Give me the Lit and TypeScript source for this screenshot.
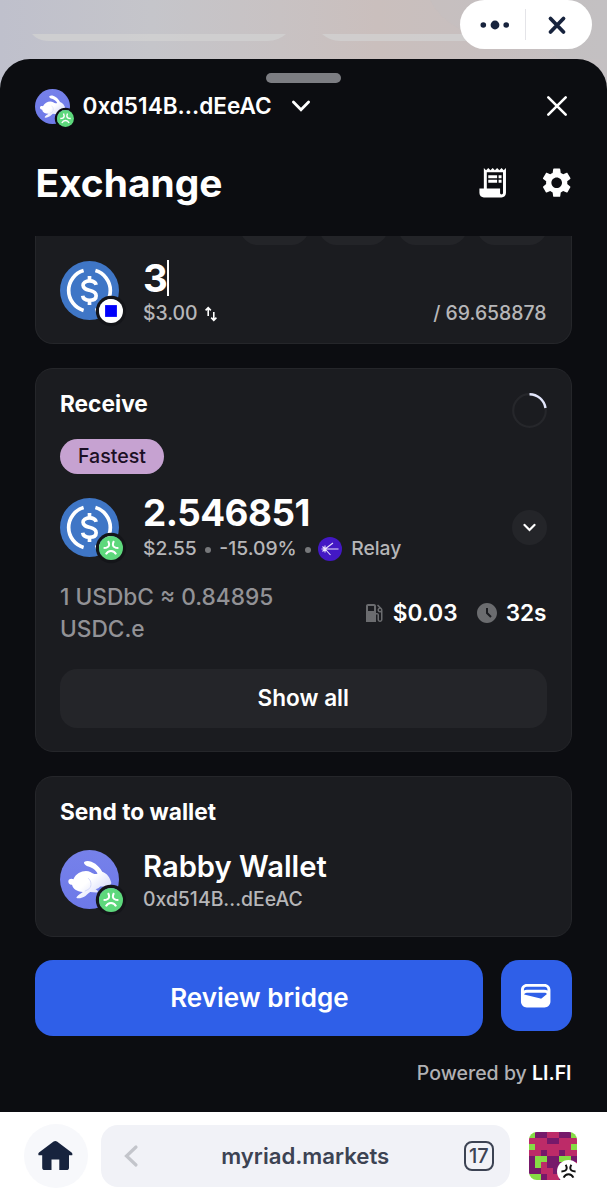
import { LitElement, html, css, svg } from "lit";
import { customElement, property } from "lit/decorators.js";

const chainGlyph = svg`
  <path d="M9.1 5C10.5 7.8 10.3 10 8.8 11C7.7 11.7 6.2 12 4.6 12M14.9 5C13.5 7.8 13.7 10 15.2 11C16.3 11.7 17.8 12 19.4 12M6.9 18.4C8 16.1 9.8 14.9 12 14.9S16 16.1 17.1 18.4"
    fill="none" stroke="currentColor" stroke-width="2" stroke-linecap="butt"/>`;

@customElement("chain-badge")
class ChainBadge extends LitElement {
  @property() kind = "green";
  static styles = css`
    :host { display: block; }
    svg { display: block; width: 100%; height: 100%; }
    .light { color: #fff; }
  `;
  render() {
    return this.kind === "base"
      ? html`<svg viewBox="0 0 24 24"><circle cx="12" cy="12" r="12" fill="#fff"/><rect x="6.1" y="6.1" width="11.8" height="11.8" fill="#0000fb"/></svg>`
      : html`<svg class="light" viewBox="0 0 24 24"><circle cx="12" cy="12" r="12" fill="#5dd87c"/>${chainGlyph}</svg>`;
  }
}

@customElement("token-avatar")
class TokenAvatar extends LitElement {
  @property() kind = "usdc";
  @property() chain = "green";
  @property({ type: Boolean, reflect: true }) small = false;
  static styles = css`
    :host { display: block; position: relative; width: 59px; height: 59px; flex: none; --ring: #141519; }
    :host([small]) { width: 35px; height: 35px; --ring: #0c0d11; }
    .pic { display: block; width: 100%; height: 100%; }
    .badge {
      position: absolute; left: 39px; top: 38.4px; width: 24px; height: 24px;
      border-radius: 50%; box-shadow: 0 0 0 3.2px var(--ring);
    }
    :host([small]) .badge { left: 22.1px; top: 21.7px; width: 17px; height: 17px; box-shadow: 0 0 0 2.2px var(--ring); }
  `;
  render() {
    const usdc = html`<svg class="pic" viewBox="0 0 32 32">
      <circle cx="16" cy="16" r="16" fill="#3f76c6"/>
      <g fill="none" stroke="#fff" stroke-width="2">
        <path d="M12.8 5.2A11.25 11.25 0 0 0 12.8 26.8M19.2 5.2A11.25 11.25 0 0 1 19.2 26.8"/>
        <path d="M19.6 13C19.3 11.5 18 10.8 16 10.8C13.8 10.8 12.5 11.8 12.5 13.2C12.5 15 14.2 15.4 16 15.9C18.1 16.4 19.6 17 19.6 18.8C19.6 20.4 18.2 21.3 16 21.3C13.8 21.3 12.5 20.5 12.3 18.9"/>
        <path d="M16 8.2V11M16 21V23.9"/>
      </g>
    </svg>`;
    const rabby = html`<svg class="pic" viewBox="0 0 176 176">
      <defs>
        <linearGradient id="bg" x1="0" y1="0" x2="0" y2="1"><stop offset="0" stop-color="#7681ea"/><stop offset="1" stop-color="#6d79e8"/></linearGradient>
        <linearGradient id="body" x1="0" y1="0" x2="1" y2="1"><stop offset=".5" stop-color="#fff"/><stop offset="1" stop-color="#c5cbf8"/></linearGradient>
      </defs>
      <circle cx="88" cy="88" r="88" fill="url(#bg)"/>
      <path fill="url(#body)" d="M72 36C86 27 112 40 126 65C140 69 150 84 153 98C153 108 138 110 120 109C116 114 112 116 106 117C114 121 116 126 108 127L90 125C82 129 76 144 52 144C44 143 54 134 68 125C50 125 38 116 36 104C26 104 22 94 27 88C32 84 38 86 40 87C50 66 74 58 92 66C98 70 106 74 112 70C106 58 92 51 80 48C74 44 70 40 72 36Z"/>
      <path d="M84 84Q96 94 91 111Q85 119 74 123" fill="none" stroke="#cdd2f7" stroke-width="2.4"/>
    </svg>`;
    return html`${this.kind === "usdc" ? usdc : rabby}<chain-badge class="badge" kind=${this.chain}></chain-badge>`;
  }
}

const PIXELS = ["gppmmppg", "mmmppmmm", "gmmmmmmg", "mmpmmpmm", "pggppggp", "pgmpppmm", "ppmmpmpp", "ggpmmppp"];
const PIXEL_COLORS: Record<string, string> = { g: "#86dc45", p: "#76196a", m: "#bd2b68" };

@customElement("app-root")
class AppRoot extends LitElement {
  static styles = css`
    :host {
      display: flex; flex-direction: column; width: 607px; height: 1199px; overflow: hidden;
      font-family: Inter, "Liberation Sans", sans-serif; color: #fff;
      background: linear-gradient(90deg, #bfc0cc 0, #c5c5ca 25%, #c8c2c3 46%, #cabfbd 62%, #c7bfbf 80%, #c4c0c2 100%);
    }
    * { box-sizing: border-box; }
    svg { display: block; flex: none; }
    .top { height: 59px; flex: none; display: flex; position: relative; justify-content: flex-end; padding-right: 15px; }
    .backdrop { position: absolute; left: 0; top: 0; }
    .capsule { position: relative; width: 132px; height: 49px; border-radius: 24.5px; background: #fff; display: flex; align-items: center; }
    .capsule .half { flex: 1; display: flex; justify-content: center; }
    .capsule .half:first-child { padding-left: 2px; }
    .capsule .half:last-child { padding-right: 4px; }
    .capsule .rule { width: 1px; height: 31px; background: #e4e4e8; }

    .sheet { height: 1053px; flex: none; background: #0c0d11; border-radius: 30px 30px 0 0; padding: 14px 35.5px 0 35.4px; display: flex; flex-direction: column; }
    .handle { width: 75px; height: 9.5px; border-radius: 5px; background: #7c7d82; margin: 0 auto; flex: none; }
    .account { display: flex; align-items: center; height: 35px; margin-top: 6px; }
    .account .addr { font-size: 22.6px; font-weight: 600; margin-left: 12.1px; width: 209px; white-space: nowrap; padding-bottom: 1px; }
    .account .close { margin-left: auto; margin-right: 4px; }
    .titlebar { display: flex; align-items: center; height: 50px; margin-top: 34.5px; }
    .titlebar h1 { margin: 0; font-size: 38.9px; font-weight: 700; line-height: 50px; flex: 1; white-space: nowrap; }
    .titlebar svg + svg { margin-left: 29px; }
    .titlebar svg:last-child { margin-right: -3px; }

    .card { background: #1b1c20; border: 1px solid #25262a; border-radius: 18px; padding: 24px; padding-left: 23.6px; flex: none; }
    .send { border-top: 0; border-radius: 0 0 18px 18px; height: 108px; margin-top: 28px; padding: 0 24px 0 23.6px; }
    .chips { display: flex; justify-content: flex-end; align-items: flex-end; gap: 10px; height: 9px; overflow: hidden; }
    .chips i { display: block; flex: none; width: 69.2px; height: 35px; background: #232428; border-radius: 18px; }
    .row { display: flex; align-items: center; }
    .token { height: 59px; }
    .send .token { margin-top: 16px; }
    .lines { margin-left: 24px; flex: 1; display: flex; flex-direction: column; }
    .big { font-size: 36.8px; letter-spacing: -.5px; font-weight: 700; line-height: 36px; height: 36px; white-space: nowrap; display: flex; align-items: center; }
    .send .big { font-size: 38.5px; letter-spacing: -.6px; }
    .send .lines { margin-top: 5px; }
    .receive .lines { margin-top: 1px; }
    .caret { width: 2px; height: 36px; background: #fff; }
    .sub { font-size: 19.4px; line-height: 25px; height: 25px; margin-top: 5px; color: #b6b6b8; font-weight: 500; display: flex; align-items: center; white-space: nowrap; }
    .sub .swap { margin-left: 7px; }
    .sub .max { margin-left: auto; }
    .receive .sub { font-size: 19.3px; }
    .dot { width: 6px; height: 6px; border-radius: 50%; background: #77787b; margin: 2px 8.5px 0 8px; }
    .relay { margin-right: 9px; margin-left: -1px; }

    .receive { height: 384px; margin-top: 24px; }
    .heading { font-size: 22.7px; line-height: 21px; height: 24px; font-weight: 700; white-space: nowrap; }
    .receive .head { display: flex; justify-content: space-between; height: 35px; }
    .pill { margin-top: 11px; width: 104px; height: 35px; border-radius: 18px; background: #c6a2d1; color: #1b0f24; font-size: 19.6px; font-weight: 500; display: flex; align-items: center; justify-content: center; padding-bottom: 1px; }
    .receive .token { margin-top: 24px; }
    .expand { width: 35px; height: 35px; border-radius: 50%; background: #242529; display: grid; place-items: center; }
    .rate { margin-top: 24px; height: 64px; justify-content: space-between; }
    .rate p { margin: 0; width: 240px; font-size: 22.7px; font-weight: 500; line-height: 32.5px; color: #929296; }
    .stats { display: flex; align-items: center; font-size: 22.6px; font-weight: 600; }
    .stats span { margin-left: 7px; white-space: nowrap; padding-bottom: 1px; }
    .stats .clock { margin-left: 17px; }
    .showall { margin-top: 24px; height: 58.5px; border-radius: 17px; background: #242529; display: grid; place-items: center; font-size: 22.6px; font-weight: 600; padding-bottom: 1px; }

    .wallet { height: 160.5px; margin-top: 24px; }
    .wallet .token { margin-top: 25px; }
    .name { font-size: 29.2px; font-weight: 600; line-height: 40px; height: 40px; white-space: nowrap; }
    .wallet .sub { margin-top: 0; }
    .actions { display: flex; gap: 18px; align-items: flex-start; margin-top: 23.5px; }
    .review { flex: 1; height: 75.5px; border-radius: 18px; background: #2f5fe8; display: grid; place-items: center; font-size: 26px; font-weight: 600; white-space: nowrap; padding-left: 1px; }
    .wbtn { width: 71px; height: 71px; border-radius: 18px; background: #2f5fe8; display: grid; place-items: center; }
    .powered { margin-top: 24.5px; line-height: 26px; text-align: right; font-size: 19.5px; font-weight: 500; color: #b1b1b4; white-space: nowrap; }
    .powered b { font-weight: 600; color: #fff; }

    .nav { height: 87px; flex: none; background: #fff; display: flex; align-items: center; padding: 1px 30px 0 24px; }
    .home { width: 64px; height: 64px; border-radius: 50%; background: #f7f8fb; display: grid; place-items: center; }
    .bar { margin-left: 13px; width: 409px; height: 62px; border-radius: 17px; background: #f1f2f7; display: flex; align-items: center; padding: 0 16.5px 0 21.5px; }
    .url { flex: 1; text-align: center; font-size: 22.2px; font-weight: 600; color: #3c4353; white-space: nowrap; padding: 0 0 2px 8px; }
    .tabs { width: 29.5px; height: 29.5px; border: 2.7px solid #3c4353; border-radius: 8px; color: #3c4353; font-size: 20px; font-weight: 500; display: flex; align-items: center; justify-content: center; line-height: 20px; letter-spacing: -.2px; }
    .me { position: relative; margin-left: 19px; }
    .me .mark { position: absolute; left: 28px; top: 28px; }
  `;

  private chevron(size: number, w: number) {
    return html`<svg width=${size} height=${size} viewBox="0 0 20 20"><path d="M2.4 6L10 13.8L17.6 6" fill="none" stroke="#fff" stroke-width=${w} stroke-linecap="round"/></svg>`;
  }

  render() {
    return html`
      <div class="top">
        <svg class="backdrop" width="607" height="90" viewBox="0 0 607 90">
          <path d="M430 0H607V59H560Q540 40 520 40Q450 40 430 0Z" fill="#bfc0c4" opacity=".25"/>
          <path d="M32 34H286Q278 41 268 41H48Q38 41 32 34ZM322 34H480V41H340Q330 41 322 34Z" fill="#d1d1d2" opacity=".75"/>
        </svg>
        <div class="capsule">
          <div class="half"><svg width="32" height="12" viewBox="0 0 32 12"><g fill="#17233d"><circle cx="6.3" cy="6" r="2.8"/><circle cx="18" cy="6" r="4.4"/><circle cx="29.2" cy="6" r="2.8"/></g></svg></div>
          <div class="rule"></div>
          <div class="half"><svg width="22" height="22" viewBox="0 0 22 22"><path d="M4.5 4.5L17.5 18M17.5 4.5L4.5 18" stroke="#17233d" stroke-width="3.8" stroke-linecap="round"/></svg></div>
        </div>
      </div>
      <div class="sheet">
        <div class="handle"></div>
        <div class="account">
          <token-avatar small kind="rabby"></token-avatar>
          <span class="addr">0xd514B...dEeAC</span>
          ${this.chevron(20, 2.8)}
          <svg class="close" width="22" height="22" viewBox="0 0 22 22"><path d="M2.3 2.3L19.7 19.7M19.7 2.3L2.3 19.7" stroke="#fff" stroke-width="2.6" stroke-linecap="round"/></svg>
        </div>
        <div class="titlebar">
          <h1>Exchange</h1>
          <svg width="35.4" height="35.4" viewBox="0 0 24 24" fill="#fff"><path d="M19.5 3.5 18 2l-1.5 1.5L15 2l-1.5 1.5L12 2l-1.5 1.5L9 2 7.5 3.5 6 2v14H3v3c0 1.66 1.34 3 3 3h12c1.66 0 3-1.34 3-3V2zM19 19c0 .55-.45 1-1 1s-1-.45-1-1v-3H8V5h11z"/><path d="M9 7h6v2H9zm7 0h2v2h-2zm-7 3h6v2H9zm7 0h2v2h-2z"/></svg>
          <svg width="35.4" height="35.4" viewBox="0 0 24 24" fill="#fff"><path d="M19.14 12.94c.04-.3.06-.61.06-.94 0-.32-.02-.64-.07-.94l2.03-1.58c.18-.14.23-.41.12-.61l-1.92-3.32c-.12-.22-.37-.29-.59-.22l-2.39.96c-.5-.38-1.03-.7-1.62-.94l-.36-2.54c-.04-.24-.24-.41-.48-.41h-3.84c-.24 0-.43.17-.47.41l-.36 2.54c-.59.24-1.13.57-1.62.94l-2.39-.96c-.22-.08-.47 0-.59.22L2.74 8.87c-.12.21-.08.47.12.61l2.03 1.58c-.05.3-.09.63-.09.94s.02.64.07.94l-2.03 1.58c-.18.14-.23.41-.12.61l1.92 3.32c.12.22.37.29.59.22l2.39-.96c.5.38 1.03.7 1.62.94l.36 2.54c.05.24.24.41.48.41h3.84c.24 0 .44-.17.47-.41l.36-2.54c.59-.24 1.13-.56 1.62-.94l2.39.96c.22.08.47 0 .59-.22l1.92-3.32c.12-.22.07-.47-.12-.61l-2.01-1.58zM12 15.6c-1.98 0-3.6-1.62-3.6-3.6s1.62-3.6 3.6-3.6 3.6 1.62 3.6 3.6-1.62 3.6-3.6 3.6z"/></svg>
        </div>

        <section class="card send">
          <div class="chips"><i></i><i></i><i></i><i></i></div>
          <div class="row token">
            <token-avatar chain="base"></token-avatar>
            <div class="lines">
              <div class="big">3<span class="caret"></span></div>
              <div class="sub">$3.00
                <svg class="swap" width="12" height="18" viewBox="0 0 12 18"><path d="M3.2 11V3M.6 5.4L3.2 2.6L5.8 5.4M8.8 7V15M6.2 12.6L8.8 15.4L11.4 12.6" fill="none" stroke="#fff" stroke-width="1.6"/></svg>
                <span class="max">/ 69.658878</span>
              </div>
            </div>
          </div>
        </section>

        <section class="card receive">
          <div class="head">
            <div class="heading">Receive</div>
            <svg width="35" height="35" viewBox="0 0 35 35"><circle cx="17.5" cy="17.5" r="16.3" fill="none" stroke="#26272b" stroke-width="2.2"/><path d="M17.5 1.2A16.3 16.3 0 0 1 33.5 15" fill="none" stroke="#e3e6fb" stroke-width="2.4"/></svg>
          </div>
          <div class="pill">Fastest</div>
          <div class="row token">
            <token-avatar></token-avatar>
            <div class="lines">
              <div class="big">2.546851</div>
              <div class="sub">$2.55<i class="dot"></i>-15.09%<i class="dot"></i>
                <svg class="relay" width="24" height="24" viewBox="0 0 24 24"><circle cx="12" cy="12" r="12" fill="#4318c4"/><path d="M7 12H20.5M7 12L15 6M7 12L12.5 18M3.5 12H7M7 8.5V15.5M4.5 9.5L7 12L4.5 14.5" fill="none" stroke="#e9e2fb" stroke-width="1.1"/></svg>Relay
              </div>
            </div>
            <div class="expand">${this.chevron(13, 3.4)}</div>
          </div>
          <div class="row rate">
            <p>1 USDbC ≈ 0.84895 USDC.e</p>
            <div class="stats">
              <svg width="24" height="24" viewBox="0 0 24 24" fill="#6b6c6f"><path d="M19.77 7.23l.01-.01-3.72-3.72L15 4.56l2.11 2.11c-.94.36-1.61 1.26-1.61 2.33 0 1.38 1.12 2.5 2.5 2.5.36 0 .69-.08 1-.21v7.21c0 .55-.45 1-1 1s-1-.45-1-1V14c0-1.1-.9-2-2-2h-1V5c0-1.1-.9-2-2-2H6c-1.1 0-2 .9-2 2v16h10v-7.5h1.5v5c0 1.38 1.12 2.5 2.5 2.5s2.5-1.12 2.5-2.5V9c0-.69-.28-1.32-.73-1.77zM12 10H6V5h6v5zm6 0c-.55 0-1-.45-1-1s.45-1 1-1 1 .45 1 1-.45 1-1 1z"/></svg>
              <span>$0.03</span>
              <svg class="clock" width="24" height="24" viewBox="0 0 24 24" fill="#6b6c6f"><path d="M11.99 2C6.47 2 2 6.48 2 12s4.47 10 9.99 10C17.52 22 22 17.52 22 12S17.52 2 11.99 2zm3.3 14.71L11 12.41V7h2v4.59l3.71 3.71-1.42 1.41z"/></svg>
              <span>32s</span>
            </div>
          </div>
          <div class="showall">Show all</div>
        </section>

        <section class="card wallet">
          <div class="heading">Send to wallet</div>
          <div class="row token">
            <token-avatar kind="rabby"></token-avatar>
            <div class="lines">
              <div class="name">Rabby Wallet</div>
              <div class="sub">0xd514B...dEeAC</div>
            </div>
          </div>
        </section>

        <div class="actions">
          <div class="review">Review bridge</div>
          <div class="wbtn"><svg width="35.4" height="35.4" viewBox="0 0 24 24" fill="#fff"><path d="M18 4H6C3.79 4 2 5.79 2 8v8c0 2.21 1.79 4 4 4h12c2.21 0 4-1.79 4-4V8c0-2.21-1.79-4-4-4zm-1.86 9.77c-.24.2-.57.28-.88.2L4.15 11.25C4.45 10.52 5.16 10 6 10h12c.67 0 1.26.34 1.63.84l-3.49 2.93zM6 6h12c1.1 0 2 .9 2 2v.55c-.59-.34-1.27-.55-2-.55H6c-.73 0-1.41.21-2 .55V8c0-1.1.9-2 2-2z"/></svg></div>
        </div>
        <div class="powered">Powered by <b>LI.FI</b></div>
      </div>

      <div class="nav">
        <div class="home"><svg width="36" height="32" viewBox="0 0 36 32"><path d="M15.6 1.6Q17.3 .4 19 1.6L33.6 12.6Q34.8 13.8 34.2 15.2H31V27.4Q31 30 28.4 30H21.3V19.4H13.5V30H6.8Q4.2 30 4.2 27.4V15.2H.6Q-.2 13.8 1 12.6Z" fill="#17233d"/></svg></div>
        <div class="bar">
          <svg width="16" height="24" viewBox="0 0 16 24"><path d="M13 3L3.5 12L13 21" fill="none" stroke="#c3c5cb" stroke-width="3.2" stroke-linecap="round"/></svg>
          <div class="url">myriad.markets</div>
          <div class="tabs">17</div>
        </div>
        <div class="me">
          <svg width="48" height="48" viewBox="0 0 8 8" shape-rendering="crispEdges">
            <defs><clipPath id="r"><rect width="8" height="8" rx="1.3"/></clipPath></defs>
            <g clip-path="url(#r)">${PIXELS.map((row, y) => [...row].map((c, x) => svg`<rect x=${x} y=${y} width="1" height="1" fill=${PIXEL_COLORS[c]}/>`))}</g>
          </svg>
          <svg class="mark" width="23" height="23" viewBox="0 0 24 24" color="#111"><circle cx="12" cy="12" r="12" fill="#fff"/>${chainGlyph}</svg>
        </div>
      </div>`;
  }
}
